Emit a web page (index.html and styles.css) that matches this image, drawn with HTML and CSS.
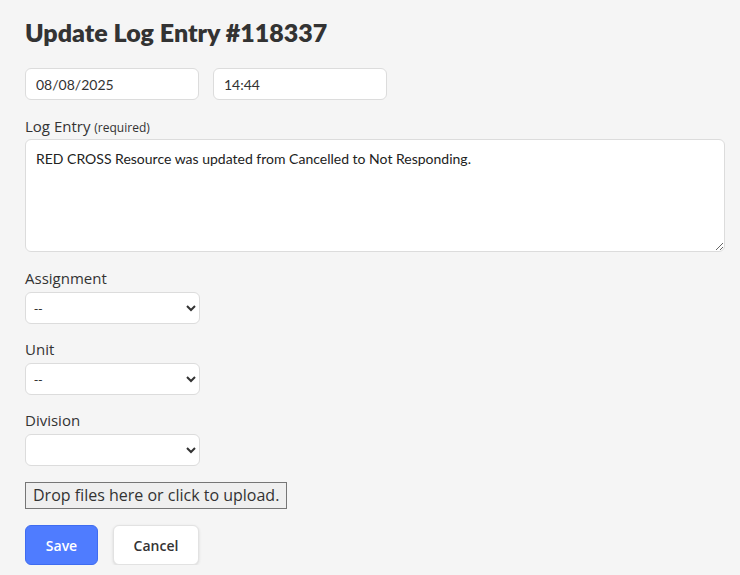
FILE: index.html
```html
<!DOCTYPE html>
<html lang="en">
<head>
    <meta charset="UTF-8">
    <meta name="viewport" content="width=device-width, initial-scale=1.0">
    <title>Update Log Entry</title>
    <link rel="stylesheet" href="styles.css">
</head>
<body>
    <div class="page">
        <h1>Update Log Entry #118337</h1>
        <form class="log-form">
            <div class="row">
                <input class="field" type="text" value="08/08/2025">
                <input class="field" type="text" value="14:44">
            </div>
            <div class="group group-entry">
                <label for="entry">Log Entry <small>(required)</small></label>
                <textarea id="entry" class="entry">RED CROSS Resource was updated from Cancelled to Not Responding.</textarea>
            </div>
            <div class="group">
                <label for="assignment">Assignment</label>
                <select id="assignment" class="picker"><option>--</option></select>
            </div>
            <div class="group">
                <label for="unit">Unit</label>
                <select id="unit" class="picker"><option>--</option></select>
            </div>
            <div class="group">
                <label for="division">Division</label>
                <select id="division" class="picker"><option></option></select>
            </div>
            <div class="dropzone">Drop files here or click to upload.</div>
            <div class="actions">
                <button type="submit" class="btn btn-save">Save</button>
                <button type="button" class="btn btn-cancel">Cancel</button>
            </div>
        </form>
    </div>
</body>
</html>
```

FILE: styles.css
```css
body {
    margin: 0;
    background-color: #f5f5f5;
    color: #333;
    font-family: 'Open Sans', sans-serif;
}
.page {
    padding: 17px 25px 0;
}
h1 {
    font-family: Lato, sans-serif;
    font-weight: 800;
    font-size: 25px;
    color: #333;
    margin: 0 0 21px;
    line-height: 30px;
}
.log-form {
    display: flex;
    flex-direction: column;
}
.row {
    display: flex;
    gap: 14px;
    margin-bottom: 16px;
}
.field {
    box-sizing: border-box;
    width: 174px;
    height: 32px;
    padding: 0 10px;
    border: 1px solid #dcdcdc;
    border-radius: 6px;
    background: #fff;
    font-family: Lato, sans-serif;
    font-size: 14px;
    color: #333;
}
.group {
    display: flex;
    flex-direction: column;
    margin-bottom: 15px;
}
.group-entry {
    margin-bottom: 16px;
}
.group label {
    font-size: 15px;
    line-height: 20px;
    margin-bottom: 4px;
    color: #333;
}
.group label small {
    font-size: 12px;
}
.entry {
    box-sizing: border-box;
    width: 700px;
    height: 113px;
    padding: 10px 10px;
    border: 1px solid #dcdcdc;
    border-radius: 6px;
    background: #fff;
    font-family: Lato, sans-serif;
    font-size: 14px;
    color: #222;
    resize: vertical;
    margin: -3px 0 0;
}
.picker {
    box-sizing: border-box;
    width: 175px;
    height: 32px;
    padding: 0 4px;
    border: 1px solid #dcdcdc;
    border-radius: 6px;
    background: #fff;
    font-family: 'Open Sans', sans-serif;
    font-size: 13px;
    color: #333;
}
.dropzone {
    align-self: flex-start;
    box-sizing: border-box;
    height: 27px;
    padding: 0 7px;
    border: 1px solid #767676;
    background: #efefef;
    font-size: 16px;
    line-height: 24px;
    color: #333;
    margin: 1px 0 16px;
}
.actions {
    display: flex;
    gap: 15px;
}
.btn {
    height: 40px;
    border-radius: 6px;
    font-family: 'Open Sans', sans-serif;
    font-size: 14px;
    font-weight: 600;
    cursor: pointer;
}
.btn-save {
    width: 73px;
    background-color: #4f7cff;
    border: 1px solid #3f6cf0;
    color: #fff;
}
.btn-cancel {
    width: 86px;
    background-color: #fff;
    border: 1px solid #e2e2e2;
    color: #333;
    box-shadow: 0 1px 3px rgba(0, 0, 0, 0.12);
}
```
